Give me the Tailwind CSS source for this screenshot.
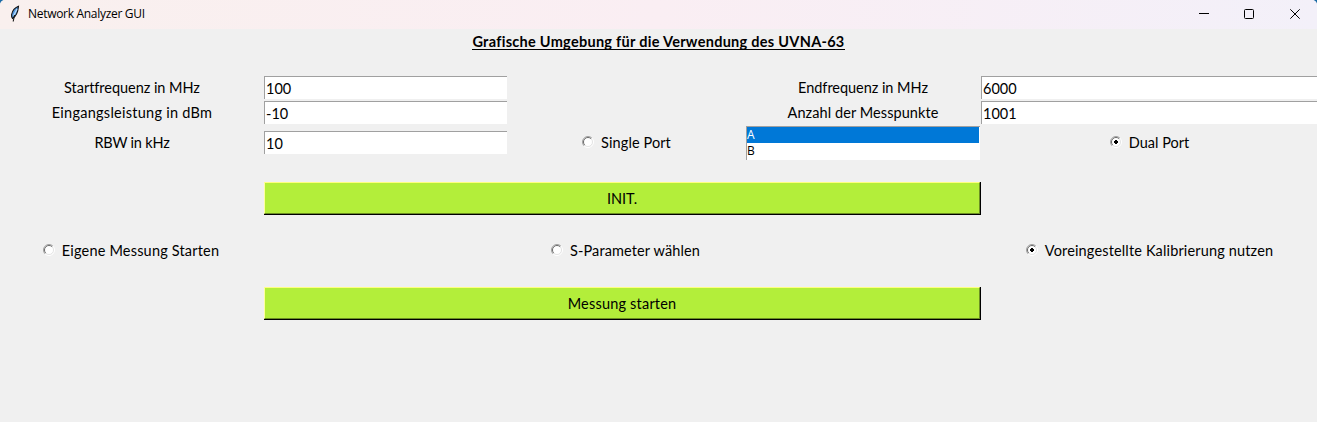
<!DOCTYPE html>
<html lang="de">
<head>
<meta charset="utf-8">
<title>Network Analyzer GUI</title>
<script src="https://cdn.jsdelivr.net/npm/@tailwindcss/browser@4"></script>
</head>
<body class="bg-[#1a6aa5]">
<svg class="hidden">
  <symbol id="radio" viewBox="0 0 12 12">
    <circle cx="6" cy="6" r="5" fill="#fff"/>
    <path d="M2.1 9.9A5.5 5.5 0 0 1 9.9 2.1" fill="none" stroke="#a0a0a0"/>
    <path d="M2.8 9.2A4.5 4.5 0 0 1 9.2 2.8" fill="none" stroke="#696969"/>
    <path d="M9.9 2.1A5.5 5.5 0 0 1 2.1 9.9" fill="none" stroke="#fff"/>
    <path d="M9.2 2.8A4.5 4.5 0 0 1 2.8 9.2" fill="none" stroke="#e3e3e3"/>
  </symbol>
  <symbol id="dot" viewBox="0 0 12 12"><path d="M5 4h2v1h1v2H7v1H5V7H4V5h1z" fill="#000" shape-rendering="crispEdges"/></symbol>
</svg>
<div class="flex h-[422px] w-[1317px] flex-col overflow-hidden rounded-t-[5px] bg-[#f0f0f0] font-['Lato',sans-serif] text-[14.5px] leading-5 text-black">
  <header class="flex h-[29px] shrink-0 items-center bg-linear-to-r from-[#f9f0ee] via-[#faeef3] to-[#f3f0f9] pb-px">
    <svg class="ml-2 h-5 w-4" viewBox="0 0 16 20">
      <path d="M10.500 2.300C7.500 3.500 4.300 7 3.600 10.500c-.2 1.600.1 2.800.9 4C8 12.500 10 8 10.500 2.300z" fill="#4f94dc" stroke="#111" stroke-width="1.100"/>
      <path d="M9 5L5.500 12" stroke="#b9dcfa" stroke-width="1.200"/>
      <path d="M6.500 11L5.200 17.500" stroke="#111" stroke-width="1.100"/>
    </svg>
    <span class="ml-1 font-['Open_Sans',sans-serif] text-[12px] tracking-[-0.3px]">Network Analyzer GUI</span>
    <div class="ml-auto flex items-center">
      <svg class="mr-[35px] size-[10px]" viewBox="0 0 10 10" shape-rendering="crispEdges"><path d="M0 4h10v1H0z"/></svg>
      <svg class="mr-[36px] size-[10px]" viewBox="0 0 10 10"><rect x=".5" y=".5" width="9" height="9" rx="1" fill="none" stroke="#000"/></svg>
      <svg class="mr-[17px] size-[10px]" viewBox="0 0 10 10"><path d="M.3.3l9.400 9.400M9.700.3L.3 9.700" fill="none" stroke="#000"/></svg>
    </div>
  </header>
  <h1 class="flex h-[47px] shrink-0 justify-center pt-[3px] font-bold tracking-[0.28px]"><span class="h-[18px] border-b border-black">Grafische Umgebung für die Verwendung des UVNA-63</span></h1>

  <main class="grid grid-cols-[264px_243px_239px_234px_337px] grid-rows-[25px_25px_34px_22px_33px_72px_33px] items-center">
    <label class="pb-px text-center tracking-[-0.04px]">Startfrequenz in MHz</label>
    <div class="flex h-[23px] items-center self-start border-t border-l border-[#a0a0a0] bg-white pt-px pl-px">100</div>
    <span></span>
    <label class="pb-px text-center tracking-[-0.04px]">Endfrequenz in MHz</label>
    <div class="ml-px flex h-[23px] items-center self-start border-t border-l border-[#a0a0a0] bg-white pt-px pl-px">6000</div>

    <label class="pb-px text-center tracking-[0.26px]">Eingangsleistung in dBm</label>
    <div class="flex h-[23px] items-center self-start border-t border-l border-[#a0a0a0] bg-white pt-px pl-px">-10</div>
    <span></span>
    <label class="pb-px text-center tracking-[0.08px]">Anzahl der Messpunkte</label>
    <div class="ml-px flex h-[23px] items-center self-start border-t border-l border-[#a0a0a0] bg-white pt-px pl-px">1001</div>

    <label class="text-center tracking-[-0.2px]">RBW in kHz</label>
    <div class="mt-[5px] flex h-[23px] items-center self-start border-t border-l border-[#a0a0a0] bg-white pt-px pl-px">10</div>
    <label class="flex items-center justify-center gap-[7px] tracking-[0.1px]"><svg class="mb-0.5 size-3"><use href="#radio"/></svg><span>Single Port</span></label>
    <div class="h-[34px] border-t border-l border-[#a0a0a0] bg-white font-['Open_Sans',sans-serif] text-[12px] leading-4">
      <div class="mr-px bg-[#0078d7] text-white">A</div>
      <div>B</div>
    </div>
    <label class="flex items-center justify-center gap-[7px] pl-0.5"><svg class="mb-0.5 size-3"><use href="#radio"/><use href="#dot"/></svg><span>Dual Port</span></label>

    <button class="col-span-3 col-start-2 row-start-5 mr-[-1px] h-[33px] border-r border-b border-black"><span class="flex h-full items-center justify-center border border-t-[#ffff80] border-r-[#6b8e23] border-b-[#6b8e23] border-l-[#ffffa0] bg-[#b3ee3a] pt-0.5">INIT.</span></button>

    <label class="row-start-6 flex items-center justify-center gap-[7px] pr-0.5 tracking-[0.18px]"><svg class="mb-0.5 size-3"><use href="#radio"/></svg><span>Eigene Messung Starten</span></label>
    <label class="col-start-3 row-start-6 flex items-center justify-center gap-[7px] pr-0.5 tracking-[0.12px]"><svg class="mb-0.5 size-3"><use href="#radio"/></svg><span>S-Parameter wählen</span></label>
    <label class="col-start-5 row-start-6 flex items-center justify-center gap-[7px] pl-0.5 tracking-[0.15px]"><svg class="mb-0.5 size-3"><use href="#radio"/><use href="#dot"/></svg><span>Voreingestellte Kalibrierung nutzen</span></label>

    <button class="col-span-3 col-start-2 row-start-7 mr-[-1px] h-[33px] border-r border-b border-black"><span class="flex h-full items-center justify-center border border-t-[#ffff80] border-r-[#6b8e23] border-b-[#6b8e23] border-l-[#ffffa0] bg-[#b3ee3a] pt-0.5 tracking-[0.2px]">Messung starten</span></button>
  </main>
</div>
</body>
</html>
